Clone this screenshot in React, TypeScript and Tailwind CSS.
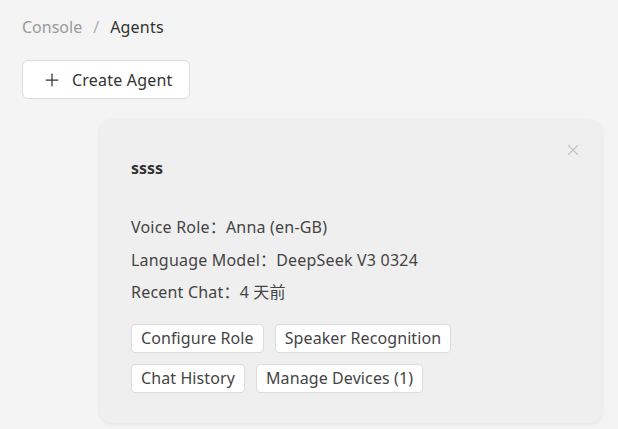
import { Plus, X } from "lucide-react";

const actions = [
  ["Configure Role", "Speaker Recognition"],
  ["Chat History", "Manage Devices (1)"],
];

const App = () => {
  return (
    <div
      className="min-h-[429px] w-[618px] bg-[#f4f4f4] pl-[22px] pt-[16px] text-[#333]"
      style={{ fontFamily: '"Noto Sans", "Noto Sans CJK SC", sans-serif' }}
    >
      <div className="flex items-center gap-[11px] text-[16px] leading-[22px]">
        <span className="text-[#9a9a9a]">Console</span>
        <span className="text-[#b0b0b0]">/</span>
        <span className="tracking-[0.2px] text-[#333]">Agents</span>
      </div>

      <button className="mt-[22px] flex h-[39px] w-[168px] items-center gap-[10px] rounded-[6px] border border-[#dcdcdc] bg-white pl-[19px] text-[16px] tracking-[0.2px] text-[#333]">
        <Plus size={20} strokeWidth={1.5} />
        Create Agent
      </button>

      <div className="relative ml-[78px] mt-[21px] w-[502px] rounded-[12px] bg-[#efefef] pb-[30px] pl-[31px] pt-[34px] shadow-[0_1px_4px_rgba(0,0,0,0.08)]">
        <X
          size={18}
          strokeWidth={1.5}
          className="absolute right-[20px] top-[21px] text-[#c2c2c2]"
        />
        <h2 className="text-[16px] font-bold leading-[28px] text-[#333]">ssss</h2>

        <div className="mt-[34px] flex flex-col gap-[10.5px] text-[16px] leading-[22px] tracking-[0.2px] text-[#444]">
          <p>Voice Role：Anna (en-GB)</p>
          <p>Language Model：DeepSeek V3 0324</p>
          <p>Recent Chat：4 天前</p>
        </div>

        <div className="mt-[21px] flex flex-col gap-[11px]">
          {actions.map((row) => (
            <div key={row[0]} className="flex gap-[11px]">
              {row.map((label) => (
                <button
                  key={label}
                  className="h-[29px] rounded-[4px] border border-[#dcdcdc] bg-white px-[9px] text-[16px] leading-[27px] tracking-[0.1px] text-[#444]"
                >
                  {label}
                </button>
              ))}
            </div>
          ))}
        </div>
      </div>
    </div>
  );
};

export default App;
